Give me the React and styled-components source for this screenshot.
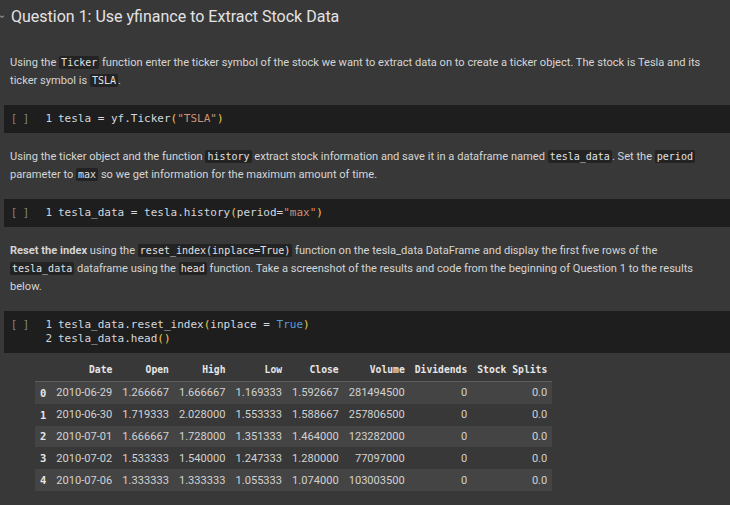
import React from "react";
import styled, { createGlobalStyle } from "styled-components";

const Global = createGlobalStyle`
  html, body { margin: 0; padding: 0; background: #383838; }
  body { font-family: Roboto, "Noto Sans", sans-serif; }
`;

const Page = styled.div`
  width: 730px;
  height: 505px;
  overflow: hidden;
  background: #383838;
  display: flex;
  flex-direction: column;
`;

const HeadingRow = styled.div`
  display: flex;
  align-items: center;
  gap: 7px;
  padding-top: 5px;
  height: 24px;
`;

const Heading = styled.h1`
  margin: 0;
  font-family: Roboto, sans-serif;
  font-weight: 400;
  font-size: 16px;
  line-height: 24px;
  color: #e3e3e3;
`;

const Markdown = styled.p`
  margin: ${(p) => p.$top || 15}px 0 15px 0;
  padding: 0 20px 0 10px;
  font-family: Roboto, sans-serif;
  font-size: 11.1px;
  line-height: 18px;
  color: #d5d5d5;
  white-space: nowrap;
`;

const InlineCode = styled.code`
  font-family: "DejaVu Sans Mono", monospace;
  font-size: 10px;
  background: #232323;
  color: #e2e2e2;
  padding: 1px 2px;
  border-radius: 2px;
`;

const CodeCell = styled.div`
  margin-left: 4px;
  background: #1e1e1e;
  padding: 7px 0;
  display: flex;
  font-family: "DejaVu Sans Mono", monospace;
  font-size: 11px;
  line-height: 14px;
`;

const RunMark = styled.div`
  width: 36px;
  padding-left: 7px;
  box-sizing: border-box;
  color: #8a8a8a;
  font-size: 10px;
`;

const Gutter = styled.div`
  width: 12px;
  text-align: right;
  color: #cfd3d8;
`;

const Lines = styled.div`
  padding-left: 6px;
  color: #d4d8de;
  white-space: pre;
`;

const Paren = styled.span`
  color: #f2c94c;
`;
const Str = styled.span`
  color: #ce9178;
`;
const Kw = styled.span`
  color: #569cd6;
`;

const Output = styled.div`
  padding: 5px 0 0 35px;
`;

const Table = styled.table`
  border-collapse: collapse;
  border-spacing: 0;
`;

const Th = styled.th`
  font-family: "DejaVu Sans Mono", monospace;
  font-weight: 700;
  font-size: 9.7px;
  color: #e6e6e6;
  text-align: right;
  padding: 0 5px;
  height: 23px;
  border-bottom: 1px solid #5c5c5c;
  white-space: nowrap;
`;

const Tr = styled.tr`
  background: ${(p) => (p.$alt ? "#444444" : "transparent")};
`;

const IndexCell = styled.th`
  font-family: "DejaVu Sans Mono", monospace;
  font-weight: 700;
  font-size: 10.5px;
  color: #e6e6e6;
  text-align: right;
  padding: 0 5px;
  height: 21.8px;
`;

const Td = styled.td`
  font-family: Roboto, sans-serif;
  font-size: 11.1px;
  color: #d2d2d2;
  text-align: right;
  padding: 0 5px;
  height: 21.8px;
  white-space: nowrap;
`;

const Chevron = () => (
  <svg width="4" height="6" viewBox="0 0 4 6" style={{ display: "block" }}>
    <path d="M0 1.5 L2 3.5 L4 1.5" stroke="#bdbdbd" strokeWidth="1" fill="none" />
  </svg>
);

const rows = [
  ["0", "2010-06-29", "1.266667", "1.666667", "1.169333", "1.592667", "281494500", "0", "0.0"],
  ["1", "2010-06-30", "1.719333", "2.028000", "1.553333", "1.588667", "257806500", "0", "0.0"],
  ["2", "2010-07-01", "1.666667", "1.728000", "1.351333", "1.464000", "123282000", "0", "0.0"],
  ["3", "2010-07-02", "1.533333", "1.540000", "1.247333", "1.280000", "77097000", "0", "0.0"],
  ["4", "2010-07-06", "1.333333", "1.333333", "1.055333", "1.074000", "103003500", "0", "0.0"],
];

const headers = ["", "Date", "Open", "High", "Low", "Close", "Volume", "Dividends", "Stock Splits"];

export default function App() {
  return (
    <>
      <Global />
      <Page>
        <HeadingRow>
          <Chevron />
          <Heading>Question 1: Use yfinance to Extract Stock Data</Heading>
        </HeadingRow>

        <Markdown $top={25}>
          Using the <InlineCode>Ticker</InlineCode> function enter the ticker symbol of the stock we want to extract data on to create a ticker object. The stock is Tesla and its
          <br />
          ticker symbol is <InlineCode>TSLA</InlineCode>.
        </Markdown>

        <CodeCell>
          <RunMark>[ ]</RunMark>
          <Gutter>1</Gutter>
          <Lines>
            tesla = yf.Ticker<Paren>(</Paren><Str>"TSLA"</Str><Paren>)</Paren>
          </Lines>
        </CodeCell>

        <Markdown>
          Using the ticker object and the function <InlineCode>history</InlineCode> extract stock information and save it in a dataframe named <InlineCode>tesla_data</InlineCode>. Set the <InlineCode>period</InlineCode>
          <br />
          parameter to <InlineCode>max</InlineCode> so we get information for the maximum amount of time.
        </Markdown>

        <CodeCell>
          <RunMark>[ ]</RunMark>
          <Gutter>1</Gutter>
          <Lines>
            tesla_data = tesla.history<Paren>(</Paren>period=<Str>"max"</Str><Paren>)</Paren>
          </Lines>
        </CodeCell>

        <Markdown>
          <b>Reset the index</b> using the <InlineCode>reset_index(inplace=True)</InlineCode> function on the tesla_data DataFrame and display the first five rows of the
          <br />
          <InlineCode>tesla_data</InlineCode> dataframe using the <InlineCode>head</InlineCode> function. Take a screenshot of the results and code from the beginning of Question 1 to the results
          <br />
          below.
        </Markdown>

        <CodeCell>
          <RunMark>[ ]</RunMark>
          <Gutter>
            1
            <br />2
          </Gutter>
          <Lines>
            tesla_data.reset_index<Paren>(</Paren>inplace = <Kw>True</Kw><Paren>)</Paren>
            {"\n"}tesla_data.head<Paren>()</Paren>
          </Lines>
        </CodeCell>

        <Output>
          <Table>
            <thead>
              <tr>
                {headers.map((h, i) => (
                  <Th key={i}>{h}</Th>
                ))}
              </tr>
            </thead>
            <tbody>
              {rows.map((r, i) => (
                <Tr key={i} $alt={i % 2 === 0}>
                  <IndexCell>{r[0]}</IndexCell>
                  {r.slice(1).map((c, j) => (
                    <Td key={j}>{c}</Td>
                  ))}
                </Tr>
              ))}
            </tbody>
          </Table>
        </Output>
      </Page>
    </>
  );
}
